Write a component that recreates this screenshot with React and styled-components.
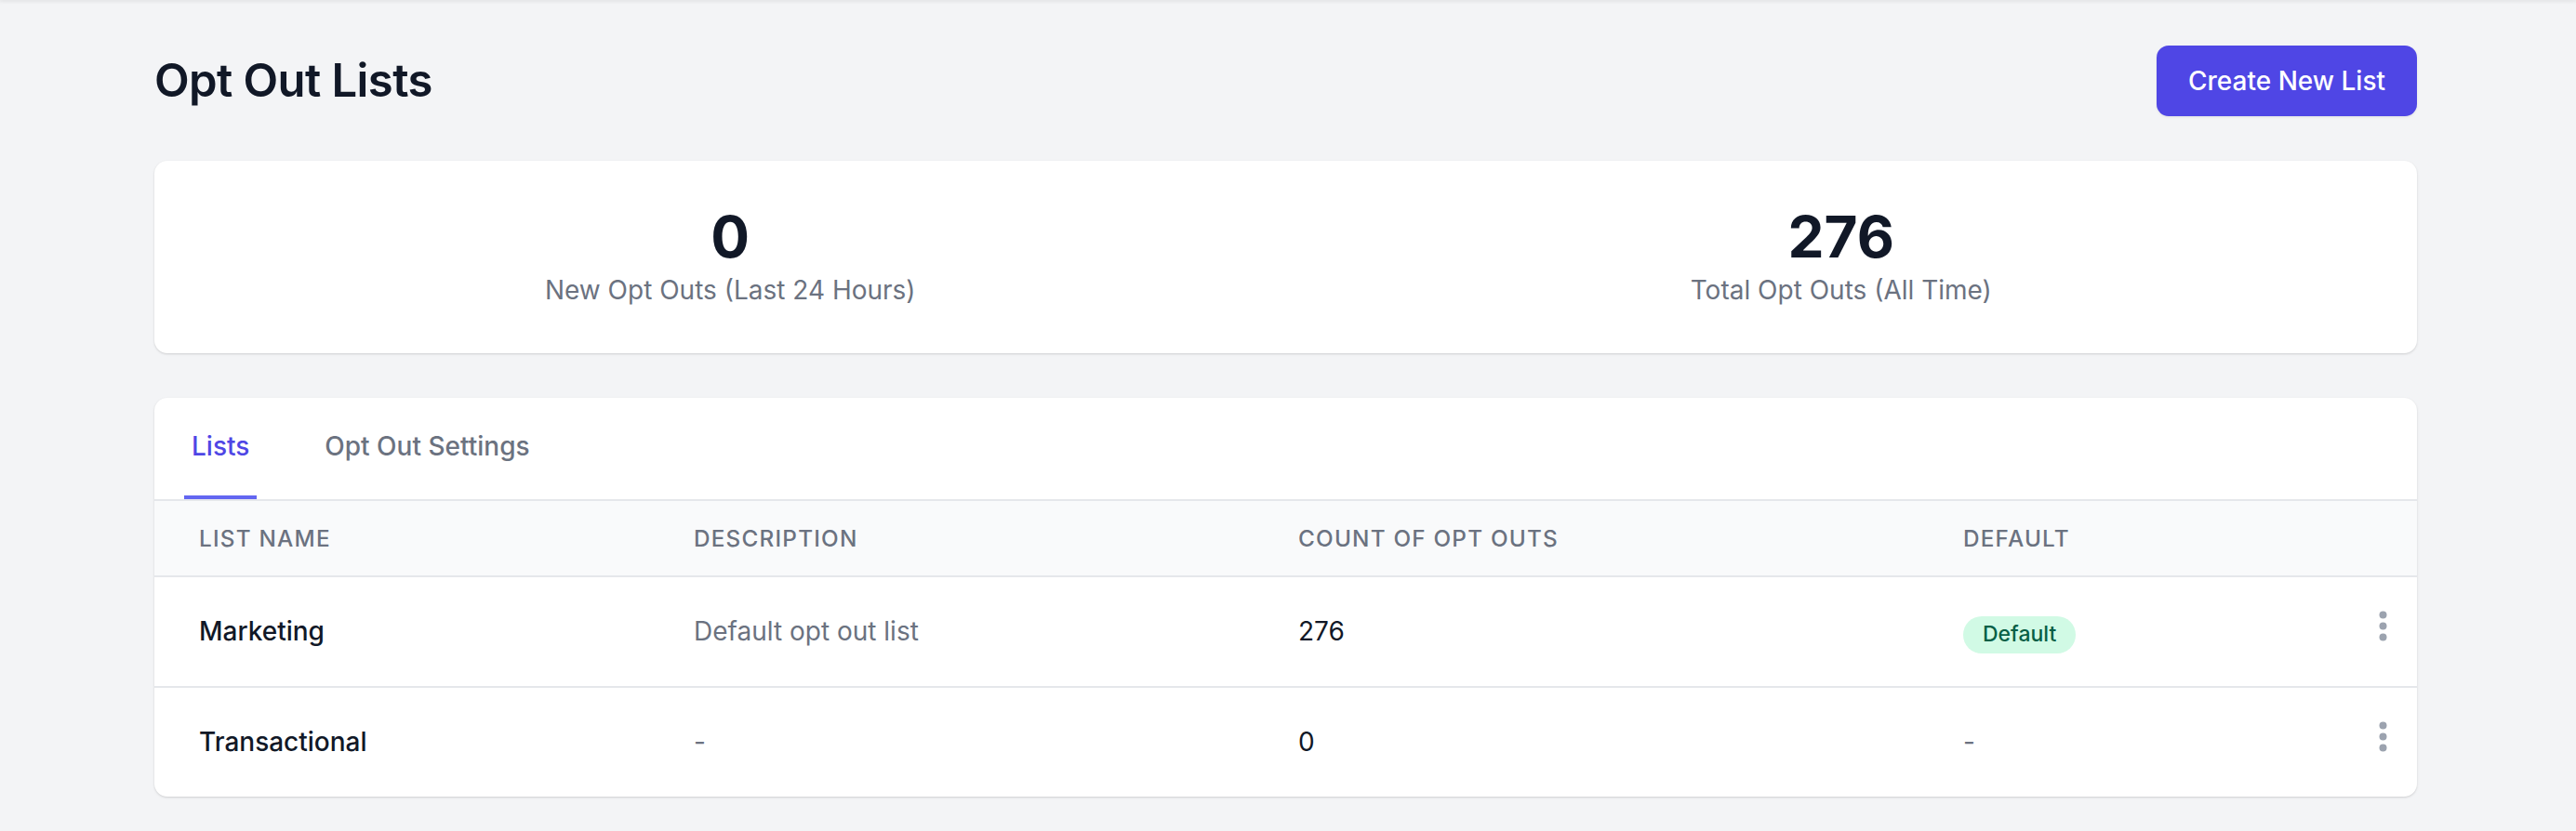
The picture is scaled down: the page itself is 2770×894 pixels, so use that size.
import React from "react";
import styled, { createGlobalStyle } from "styled-components";

const GlobalStyle = createGlobalStyle`
  html, body {
    margin: 0;
    padding: 0;
    background: #f3f4f6;
    font-family: Inter, "Noto Sans", "Liberation Sans", sans-serif;
    -webkit-font-smoothing: antialiased;
  }
  * { box-sizing: border-box; }
`;

const TopShade = styled.div`
  height: 0;
  box-shadow: 0 0 4px 1px rgba(0, 0, 0, 0.14);
`;

const Page = styled.main`
  min-height: 894px;
  padding: 49px 171px 40px 166px;
  display: flex;
  flex-direction: column;
  gap: 48px;
`;

const HeaderRow = styled.div`
  display: flex;
  align-items: center;
  justify-content: space-between;
`;

const Title = styled.h1`
  margin: 0;
  font-size: 49px;
  line-height: 1.2;
  font-weight: 600;
  color: #111827;
  letter-spacing: -0.012em;
`;

const PrimaryButton = styled.button`
  height: 76px;
  padding: 0 34px;
  border: none;
  border-radius: 13px;
  background: #4f46e5;
  color: #ffffff;
  font-family: inherit;
  font-size: 28px;
  font-weight: 500;
  box-shadow: 0 1px 3px rgba(0, 0, 0, 0.08);
  cursor: pointer;
`;

const Card = styled.section`
  background: #ffffff;
  border-radius: 14px;
  box-shadow: 0 1px 3px rgba(0, 0, 0, 0.1), 0 1px 2px rgba(0, 0, 0, 0.06);
  overflow: hidden;
`;

const StatsGrid = styled.div`
  display: grid;
  grid-template-columns: 1fr 1fr;
  padding: 47px 22px;
`;

const Stat = styled.div`
  display: flex;
  flex-direction: column;
  align-items: center;
`;

const StatValue = styled.div`
  font-size: 62px;
  line-height: 70.7px;
  font-weight: 700;
  color: #111827;
`;

const StatLabel = styled.div`
  font-size: 28px;
  line-height: 42.4px;
  color: #6b7280;
`;

const TabBar = styled.nav`
  display: flex;
  gap: 65px;
  padding: 0 32px;
  border-bottom: 2px solid #e5e7eb;
`;

const Tab = styled.button`
  background: none;
  border: none;
  border-bottom: 4px solid ${(p) => (p.$active ? "#6366f1" : "transparent")};
  padding: 31px 8px;
  font-family: inherit;
  font-size: 28px;
  line-height: 42.4px;
  font-weight: 500;
  color: ${(p) => (p.$active ? "#4f46e5" : "#6b7280")};
  cursor: pointer;
`;

const columns = "532px 650px 715px 1fr 120px";

const HeadRow = styled.div`
  display: grid;
  grid-template-columns: ${columns};
  align-items: center;
  height: 82px;
  background: #f9fafb;
  border-bottom: 2px solid #e5e7eb;
`;

const HeadCell = styled.div`
  padding-left: 48px;
  font-size: 24.3px;
  font-weight: 500;
  letter-spacing: 0.05em;
  text-transform: uppercase;
  color: #6b7280;
`;

const BodyRow = styled.div`
  display: grid;
  grid-template-columns: ${columns};
  align-items: center;
  height: ${(p) => (p.$last ? "117px" : "119px")};
  border-bottom: ${(p) => (p.$last ? "none" : "2px solid #e5e7eb")};
`;

const Cell = styled.div`
  padding-left: 48px;
  font-size: 28px;
  line-height: 42.4px;
  font-weight: ${(p) => (p.$strong ? 500 : 400)};
  color: ${(p) => (p.$muted ? "#6b7280" : "#111827")};
`;

const Badge = styled.span`
  display: inline-flex;
  align-items: center;
  height: 40px;
  margin-top: 7px;
  padding: 0 21px;
  border-radius: 999px;
  background: #d1fae5;
  color: #065f46;
  font-size: 23px;
  font-weight: 500;
`;

const ActionCell = styled.div`
  align-self: start;
  display: flex;
  justify-content: flex-end;
  padding: 36px 32px 0 0;
`;

const MenuButton = styled.button`
  display: flex;
  padding: 0;
  border: none;
  background: none;
  color: #9ca3af;
  cursor: pointer;
`;

const DotsIcon = () => (
  <svg width="9" height="33" viewBox="0 0 9 33" fill="currentColor" aria-hidden="true">
    <circle cx="4.5" cy="4.5" r="4" />
    <circle cx="4.5" cy="16.5" r="4" />
    <circle cx="4.5" cy="28.5" r="4" />
  </svg>
);

const rows = [
  { name: "Marketing", description: "Default opt out list", count: "276", isDefault: true },
  { name: "Transactional", description: "-", count: "0", isDefault: false },
];

export default function App() {
  return (
    <>
      <GlobalStyle />
      <TopShade />
      <Page>
        <HeaderRow>
          <Title>Opt Out Lists</Title>
          <PrimaryButton>Create New List</PrimaryButton>
        </HeaderRow>

        <Card>
          <StatsGrid>
            <Stat>
              <StatValue>0</StatValue>
              <StatLabel>New Opt Outs (Last 24 Hours)</StatLabel>
            </Stat>
            <Stat>
              <StatValue>276</StatValue>
              <StatLabel>Total Opt Outs (All Time)</StatLabel>
            </Stat>
          </StatsGrid>
        </Card>

        <Card>
          <TabBar>
            <Tab $active>Lists</Tab>
            <Tab>Opt Out Settings</Tab>
          </TabBar>
          <HeadRow>
            <HeadCell>List Name</HeadCell>
            <HeadCell>Description</HeadCell>
            <HeadCell>Count of Opt Outs</HeadCell>
            <HeadCell>Default</HeadCell>
            <HeadCell />
          </HeadRow>
          {rows.map((r, i) => (
            <BodyRow key={r.name} $last={i === rows.length - 1}>
              <Cell $strong>{r.name}</Cell>
              <Cell $muted>{r.description}</Cell>
              <Cell>{r.count}</Cell>
              <Cell $muted>{r.isDefault ? <Badge>Default</Badge> : "-"}</Cell>
              <ActionCell>
                <MenuButton aria-label="Actions">
                  <DotsIcon />
                </MenuButton>
              </ActionCell>
            </BodyRow>
          ))}
        </Card>
      </Page>
    </>
  );
}
